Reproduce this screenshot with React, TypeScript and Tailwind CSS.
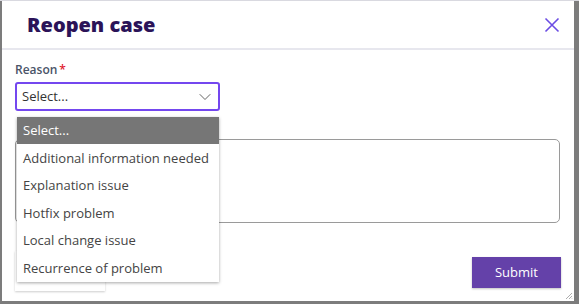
import { ChevronDown } from "lucide-react";

const reasons = [
  "Additional information needed",
  "Explanation issue",
  "Hotfix problem",
  "Local change issue",
  "Recurrence of problem",
];

const App = () => {
  return (
    <div
      className="w-[579px] h-[304px] bg-[#7c7c7c] pl-[2px] pr-[5px] pb-[3px] border-t border-[#d9d9e0]"
      style={{ fontFamily: '"Open Sans", "Noto Sans", sans-serif' }}
    >
      <div className="relative flex h-full flex-col bg-white">
        {/* header */}
        <div className="flex h-[49px] shrink-0 items-center justify-between border-b-2 border-[#e7e7ee] pl-[25px] pr-[14px]">
          <h1 className="text-[20px] font-extrabold leading-none text-[#2b1358]">
            Reopen case
          </h1>
          <svg width="16" height="16" viewBox="0 0 16 16" className="mt-[1px]">
            <path
              d="M1.5 1.5 L14.5 14.5 M14.5 1.5 L1.5 14.5"
              stroke="#6b4de3"
              strokeWidth="1.6"
              fill="none"
            />
          </svg>
        </div>

        {/* body */}
        <div className="flex flex-1 flex-col px-[13px] pt-[12px]">
          <label className="text-[12px] font-semibold leading-4 text-[#4a5468]">
            Reason<span className="ml-[2px] text-[#e0202e]">*</span>
          </label>
          <div className="relative mt-[4px] w-[205px]">
            <div className="flex h-[29px] items-center justify-between rounded-[3px] border-2 border-[#7447ef] pl-[5px] pr-[3px] text-[13px] text-[#333]">
              <span>Select...</span>
              <ChevronDown size={20} strokeWidth={1.1} className="text-[#555]" />
            </div>

            {/* open list */}
            <div className="absolute left-[2px] top-[35px] z-10 w-[202px] bg-white shadow-[0_1px_3px_rgba(0,0,0,0.35)]">
              <div className="flex h-[27px] items-center bg-[#767676] px-[6px] text-[13px] text-white">
                Select...
              </div>
              {reasons.map((reason) => (
                <div
                  key={reason}
                  className="flex h-[27.6px] items-center px-[6px] pt-[1px] text-[13px] text-[#444]"
                >
                  {reason}
                </div>
              ))}
            </div>
          </div>

          <textarea className="mt-[28px] h-[84px] w-[545px] resize-none rounded-[5px] border border-[#9a9a9a]" />

          <div className="mt-auto mb-[13px] flex items-end justify-between">
            <div className="mb-[-3px] h-[40px] w-[90px] bg-white shadow-[0_1px_2px_rgba(0,0,0,0.2)]" />
            <button className="h-[31px] w-[89px] bg-[#6441a9] text-[13px] font-medium text-white shadow-[0_1px_2px_rgba(0,0,0,0.25)]">
              Submit
            </button>
          </div>
        </div>

        <svg
          width="8"
          height="8"
          viewBox="0 0 8 8"
          className="absolute bottom-[1px] right-[1px]"
        >
          <path d="M7 1 L1 7 M7 4 L4 7 M7 6.5 L6.5 7" stroke="#999" strokeWidth="0.8" />
        </svg>
      </div>
    </div>
  );
};

export default App;
